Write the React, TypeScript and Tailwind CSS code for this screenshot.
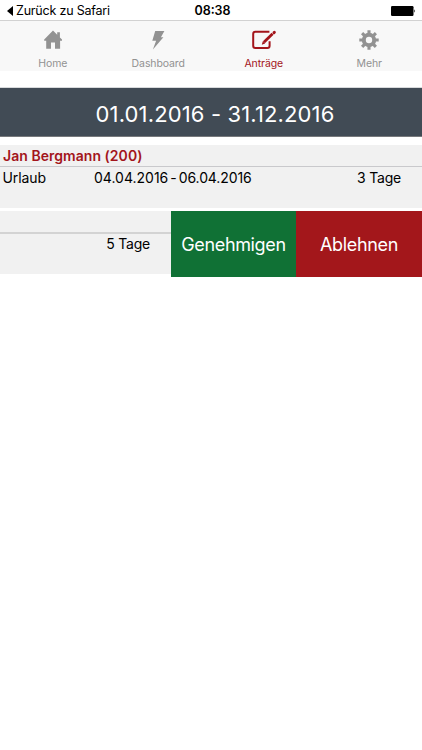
import React from 'react'

const HomeIcon = () => (
  <svg className="w-6 h-6" viewBox="0 0 24 24" fill="currentColor">
    <path d="M12 2.6L3.2 11.6V12.8H5.2V20.8H10V14.6H14V20.8H19.1V12.8H21V11.6L18.9 9.5V4.2H16.2V6.8Z" />
  </svg>
)

const BoltIcon = () => (
  <svg className="w-6 h-6" viewBox="0 0 24 24" fill="currentColor">
    <path d="M9.2 3H18.4L14.9 9.2H17.4L6.9 21.4L10.1 12.8H6.3Z" />
  </svg>
)

const EditIcon = () => (
  <svg className="w-6 h-6 overflow-visible" viewBox="0 0 24 24" fill="none" stroke="currentColor">
    <path d="M17.4 3.8H3.4Q1.2 3.8 1.2 6V17.8Q1.2 20 3.4 20H15.4Q17.6 20 17.6 17.8V13.2" strokeWidth="2" />
    <path d="M11.9 14.3L20.6 5.7" strokeWidth="2.8" />
    <path d="M9.8 16.7L10.8 13.2L13.2 15.6Z" fill="currentColor" stroke="none" />
    <path d="M22 4.6L22.4 4.2" strokeWidth="2.9" strokeLinecap="round" />
  </svg>
)

const GearIcon = () => (
  <svg className="w-6 h-6" viewBox="0 0 24 24" fill="none" stroke="currentColor">
    <circle cx="12" cy="12" r="5.2" strokeWidth="4" />
    <path d="M12 2.3V6M12 18V21.7M2.3 12H6M18 12H21.7M5.1 5.1L7.8 7.8M16.2 16.2L18.9 18.9M18.9 5.1L16.2 7.8M7.8 16.2L5.1 18.9" strokeWidth="3.1" />
  </svg>
)

const tabs = [
  { label: 'Home', icon: <HomeIcon /> },
  { label: 'Dashboard', icon: <BoltIcon /> },
  { label: 'Anträge', icon: <EditIcon />, active: true },
  { label: 'Mehr', icon: <GearIcon /> },
]

const App = () => {
  return (
    <main className="h-screen w-full bg-white overflow-hidden font-['Inter',sans-serif] text-black">
      <header className="h-5 grid grid-cols-3 items-center pl-[7px] pr-1.5 text-[12.5px] leading-5">
        <div className="flex items-center gap-[3px] whitespace-nowrap">
          <svg className="w-1.5 h-2.5" viewBox="0 0 6 10"><path d="M6 0V10L0 5Z" /></svg>
          <span className="tracking-[-0.2px]">Zurück zu Safari</span>
        </div>
        <span className="pl-0.5 pt-px text-center font-semibold">08:38</span>
        <svg className="w-[25px] h-2.5 mt-px justify-self-end" viewBox="0 0 25 10">
          <rect width="22.5" height="10" rx="1.2" />
          <path d="M23.3 3.3Q25 5 23.3 6.7Z" />
        </svg>
      </header>
      <nav className="h-[51px] bg-[#f8f8f8] border-t border-[#d2d2d2] grid grid-cols-4">
        {tabs.map((tab) => (
          <div key={tab.label} className={`flex flex-col items-center pt-[7px] ${tab.active ? 'text-[#a3151b]' : 'text-[#929292]'}`}>
            {tab.icon}
            <span className="text-[10.5px] leading-4 mt-1 tracking-[-0.1px]">{tab.label}</span>
          </div>
        ))}
      </nav>

      <h1 className="mt-4 h-[50px] bg-[#414b55] border-t border-b border-t-[#d8dadc] border-b-[#77797c] pt-1 pl-2 flex items-center justify-center text-white text-[22px] tracking-[0.14px]">
        01.01.2016 - 31.12.2016
      </h1>

      <section className="mt-2 h-[63px] bg-[#f1f1f1] text-[14px]">
        <div className="h-[22px] border-b border-[#c9c9cc] px-[3px] leading-[21px] font-semibold text-[#a3151b] tracking-[0.04px]">Jan Bergmann (200)</div>
        <div className="flex pl-[2.5px] pr-[21px] leading-[22px]">
          <span className="w-[91.5px] tracking-[-0.1px]">Urlaub</span>
          <span>04.04.2016</span>
          <span className="px-0.5">-</span>
          <span className="tracking-[-0.1px]">06.04.2016</span>
          <span className="ml-auto tracking-[-0.2px]">3 Tage</span>
        </div>
      </section>

      <section className="mt-[3px] h-[66px] flex">
        <div className="w-[171px] h-[63px] bg-[#f1f1f1] text-[14px]">
          <div className="h-[23px] border-b-2 border-[#d3d3d3]" />
          <div className="text-right pr-[21px] leading-5 tracking-[-0.2px]">5 Tage</div>
        </div>
        <button className="w-[125px] bg-[#107135] text-white text-[18px] tracking-[-0.35px]">Genehmigen</button>
        <button className="flex-1 bg-[#a3171b] text-white text-[18px] tracking-[-0.35px]">Ablehnen</button>
      </section>
    </main>
  )
}

export default App
